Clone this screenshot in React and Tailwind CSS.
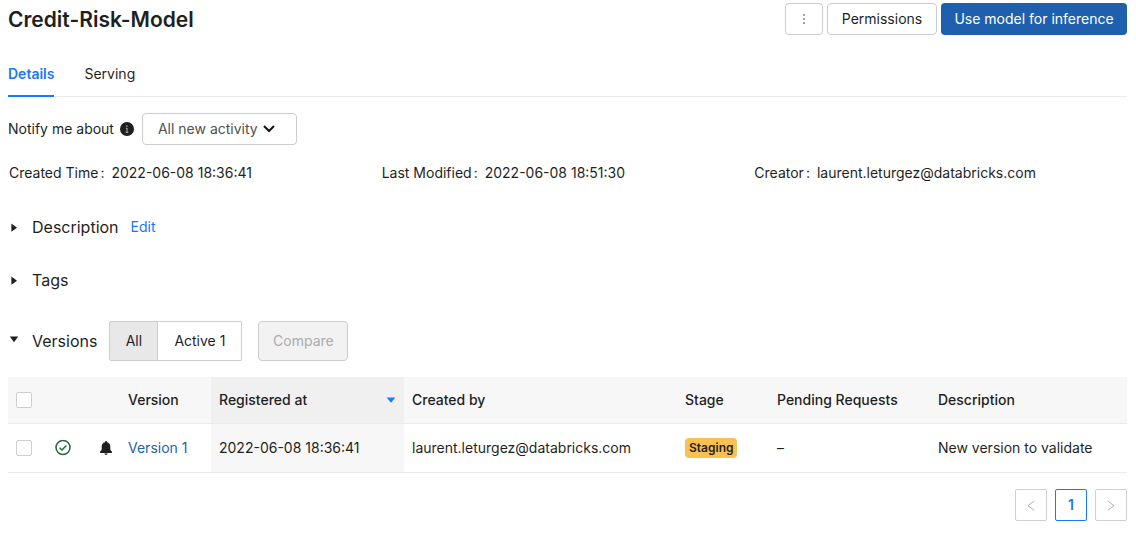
import { useState } from "react";

const HEAD_BUTTON = "flex h-8 items-center justify-center rounded border border-[#cccccc] bg-white text-[14px]";

const INFO = [
  { label: "Created Time", value: "2022-06-08 18:36:41" },
  { label: "Last Modified", value: "2022-06-08 18:51:30" },
  { label: "Creator", value: "laurent.leturgez@databricks.com" },
];

function CheckCircle() {
  return (
    <svg viewBox="0 0 16 16" className="block size-4" fill="none" stroke="#1b6e34" strokeWidth="1.5" role="img" aria-label="Ready">
      <circle cx="8" cy="7.500" r="7" />
      <path d="M4.600 7.700 7 10l4.400-4.600" />
    </svg>
  );
}

function Bell() {
  return (
    <svg viewBox="0 0 14 14" className="block size-3.5" fill="#1f1f1f" role="img" aria-label="Following">
      <path d="M7 0c-.6 0-1 .4-1 .9v.3C4 1.700 2.700 3.300 2.700 5.400v2.500c0 .9-.5 1.500-1.100 2.100-.4.400-.6.700-.6 1.200 0 .6.400.9.900.9h10.200c.5 0 .9-.3.900-.9 0-.5-.2-.8-.6-1.200-.6-.6-1.100-1.200-1.100-2.100V5.400C11.300 3.300 10 1.700 8 1.200V.9C8 .4 7.600 0 7 0ZM5.300 12.600c.1.800.8 1.400 1.700 1.400s1.600-.6 1.700-1.400Z" />
    </svg>
  );
}

function Caret({ open }) {
  return (
    <svg viewBox="0 0 12 12" className="block size-3" fill="#1f1f1f" aria-hidden="true">
      {open ? <path d="M1.800 1.500h8.400L6 7.200Z" /> : <path d="M3.400 2.600 9 6.700l-5.600 4.100Z" />}
    </svg>
  );
}

function SectionTitle({ open, onToggle, children }) {
  return (
    <h2>
      <button type="button" aria-expanded={open} onClick={onToggle} className="flex items-center gap-3 text-[16px] leading-6">
        <Caret open={open} />
        {children}
      </button>
    </h2>
  );
}

function Tick({ label }) {
  return (
    <input
      type="checkbox"
      aria-label={label}
      className="block size-4 appearance-none rounded-xs border border-[#cfcfcf] bg-white checked:bg-[#1677ff]"
    />
  );
}

export default function App() {
  const [description, setDescription] = useState(false);
  const [tags, setTags] = useState(false);
  const [versions, setVersions] = useState(true);

  return (
    <main className="bg-white pt-[3px] pr-[9px] pb-3 pl-2 font-['Inter','Liberation_Sans',sans-serif] text-[14px] leading-5 text-[#1f1f1f]">
      <header className="flex h-8 items-center justify-between">
        <h1 className="pt-0.5 text-[21px] leading-8 font-semibold">Credit-Risk-Model</h1>
        <div className="flex gap-1">
          <button type="button" aria-label="More actions" className={`${HEAD_BUTTON} w-[38px]`}>
            <svg viewBox="0 0 14 14" className="size-3.5" fill="#555555" aria-hidden="true">
              <rect x="6.200" y="2.200" width="1.600" height="1.600" rx=".5" />
              <rect x="6.200" y="6.200" width="1.600" height="1.600" rx=".5" />
              <rect x="6.200" y="10.200" width="1.600" height="1.600" rx=".5" />
            </svg>
          </button>
          <button type="button" className={`${HEAD_BUTTON} w-[110px]`}>Permissions</button>
          <button type="button" className="h-8 w-[186px] rounded bg-[#1e5fae] text-[14px] text-white">
            Use model for inference
          </button>
        </div>
      </header>

      <nav className="mt-4 flex h-[46px] gap-[30px] border-b border-[#ebebeb]">
        <a href="#details" aria-current="page" className="-mb-px border-b-2 border-[#1677ff] pt-[13px] font-semibold text-[#1677ff]">
          Details
        </a>
        <a href="#serving" className="pt-[13px]">Serving</a>
      </nav>

      <div className="mt-4 flex h-8 items-center">
        <label htmlFor="notify">Notify me about</label>
        <svg viewBox="0 0 14 14" className="ml-1.5 size-3.5" role="img" aria-label="Information">
          <circle cx="7" cy="7" r="7" fill="#1f1f1f" />
          <path d="M7 6v4.300M5.900 6.200H7M5.700 10.300h2.600" stroke="#b5b5b5" fill="none" />
          <circle cx="6.900" cy="4" r=".8" fill="#b5b5b5" />
        </svg>
        <div className="relative ml-2">
          <select id="notify" className="h-8 w-[155px] appearance-none rounded border border-[#cccccc] bg-white pl-[15px] text-[14px] text-[#505050]">
            <option>All new activity</option>
            <option>Activity on versions I follow</option>
            <option>Mute notifications</option>
          </select>
          <svg viewBox="0 0 12 8" className="pointer-events-none absolute top-3 right-[22px] h-2 w-3" fill="none" stroke="#111111" strokeWidth="2" aria-hidden="true">
            <path d="m1 1 5 5 5-5" />
          </svg>
        </div>
      </div>

      <dl className="mt-[18px] grid grid-cols-3 pl-px">
        {INFO.map((item) => (
          <div key={item.label} className="flex gap-[7px]">
            <dt className="flex gap-0.5">
              {item.label}
              <span>:</span>
            </dt>
            <dd>{item.value}</dd>
          </div>
        ))}
      </dl>

      <div className="mt-8 flex h-6 items-center gap-3">
        <SectionTitle open={description} onToggle={() => setDescription(!description)}>Description</SectionTitle>
        <button type="button" className="text-[14px] text-[#1677ff]">Edit</button>
      </div>

      <div className="mt-[29px] flex h-6 items-center">
        <SectionTitle open={tags} onToggle={() => setTags(!tags)}>Tags</SectionTitle>
      </div>

      <div className="mt-[29px] flex h-10 items-center">
        <SectionTitle open={versions} onToggle={() => setVersions(!versions)}>Versions</SectionTitle>
        <div className="ml-3 flex h-10">
          <button type="button" aria-pressed="true" className="w-[49px] rounded-l-xs border border-[#cccccc] bg-[#e8e8e8] text-[14px]">All</button>
          <button type="button" aria-pressed="false" className="w-[84px] rounded-r-xs border border-l-0 border-[#cccccc] bg-white text-[14px]">Active 1</button>
        </div>
        <button type="button" disabled className="ml-4 h-10 w-[90px] rounded border border-[#cccccc] bg-[#f2f2f2] text-[14px] text-[#acacac]">
          Compare
        </button>
      </div>

      {versions && (
        <>
          <table className="mt-4 w-full table-fixed border-collapse text-left">
            <colgroup>
              <col className="w-[39px]" />
              <col className="w-[44px]" />
              <col className="w-[29px]" />
              <col className="w-[91px]" />
              <col className="w-[193px]" />
              <col className="w-[273px]" />
              <col className="w-[92px]" />
              <col className="w-[161px]" />
              <col />
            </colgroup>
            <thead>
              <tr className="h-[46px] border-b border-[#ebebeb] bg-[#f7f7f7] [&>th]:px-2 [&>th]:font-medium">
                <th scope="col"><Tick label="Select all versions" /></th>
                <th scope="col" aria-label="Status" />
                <th scope="col" aria-label="Notifications" />
                <th scope="col">Version</th>
                <th scope="col" aria-sort="descending" className="bg-[#f0f0f0]">
                  <button type="button" className="flex w-full items-center justify-between">
                    Registered at
                    <svg viewBox="0 0 10 6" className="h-1.5 w-2.5" fill="#1677ff" aria-hidden="true">
                      <path d="M.7.500h8.600L5 5.700Z" />
                    </svg>
                  </button>
                </th>
                <th scope="col">Created by</th>
                <th scope="col">Stage</th>
                <th scope="col">Pending Requests</th>
                <th scope="col">Description</th>
              </tr>
            </thead>
            <tbody>
              <tr className="h-[49px] border-b border-[#ebebeb] [&>td]:px-2">
                <td><Tick label="Select Version 1" /></td>
                <td><CheckCircle /></td>
                <td><Bell /></td>
                <td><a href="#version-1" className="text-[#1e5fae]">Version 1</a></td>
                <td className="bg-[#f7f7f7]">2022-06-08 18:36:41</td>
                <td>laurent.leturgez@databricks.com</td>
                <td>
                  <span className="block w-fit rounded bg-[#f8c151] px-1 text-[12px] leading-5 font-semibold">Staging</span>
                </td>
                <td>–</td>
                <td>New version to validate</td>
              </tr>
            </tbody>
          </table>

          <nav aria-label="Pages" className="mt-4 flex justify-end gap-2">
            <button type="button" disabled aria-label="Previous page" className="flex size-8 items-center justify-center rounded-xs border border-[#cfcfcf]">
              <svg viewBox="0 0 10 12" className="h-3 w-2.5" fill="none" stroke="#b0b0b0" aria-hidden="true">
                <path d="M8.200 2 2 6.700l6.200 4.600" />
              </svg>
            </button>
            <button type="button" aria-current="page" className="size-8 rounded-xs border border-[#1677ff] text-[14px] font-semibold text-[#1677ff]">1</button>
            <button type="button" disabled aria-label="Next page" className="flex size-8 items-center justify-center rounded-xs border border-[#cfcfcf]">
              <svg viewBox="0 0 10 12" className="h-3 w-2.5" fill="none" stroke="#b0b0b0" aria-hidden="true">
                <path d="M1.800 2 8 6.700l-6.200 4.600" />
              </svg>
            </button>
          </nav>
        </>
      )}
    </main>
  );
}
